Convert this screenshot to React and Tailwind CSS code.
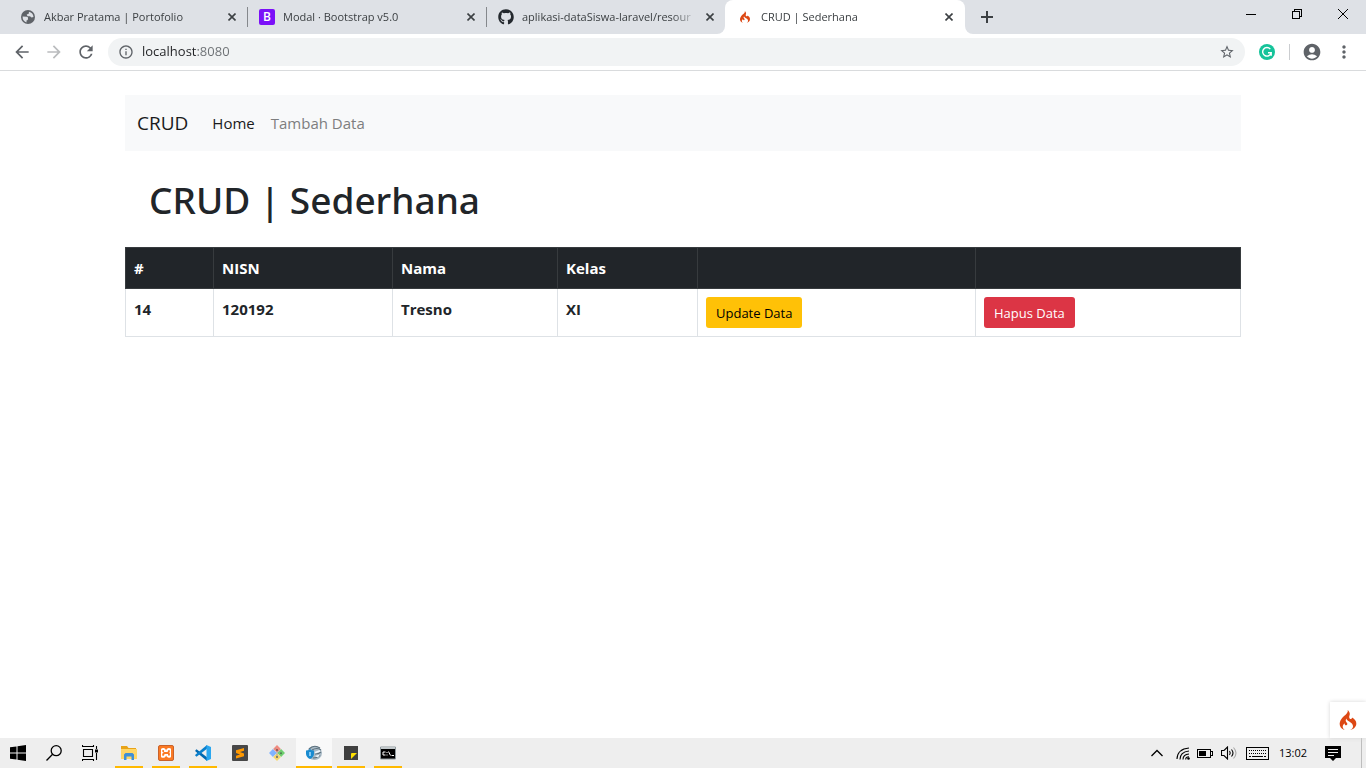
import React from "react";
import { FaGithub } from "react-icons/fa";
import { SiCodeigniter, SiXampp } from "react-icons/si";
import {
  MdArrowBack,
  MdArrowForward,
  MdRefresh,
  MdInfoOutline,
  MdStarBorder,
  MdAccountCircle,
  MdMoreVert,
} from "react-icons/md";

function GlobeIcon() {
  return (
    <svg viewBox="0 0 16 16" className="size-4">
      <circle cx="8" cy="8" r="7" fill="#5f6368" />
      <path
        d="M2.600 7.500L7 7.800q1.500.5 1 2l-.3 1.200-1.200.6v2Q2.500 12 2.600 7.500zM9 2.700q4 .8 4.500 5.300l-2 .5-1.500-1.200H7.500L6.700 5.500l2-.8z"
        fill="#dee1e6"
      />
    </svg>
  );
}

const tabs = [
  { title: "Akbar Pratama | Portofolio", icon: <GlobeIcon /> },
  {
    title: "Modal · Bootstrap v5.0",
    icon: (
      <span className="flex size-4 items-center justify-center rounded-xs bg-[#7b10f8] text-xs font-semibold text-white">
        B
      </span>
    ),
  },
  {
    title: "aplikasi-dataSiswa-laravel/resour",
    icon: <FaGithub className="size-4 text-[#24292e]" />,
  },
];

function CloseIcon({ className }) {
  return (
    <svg viewBox="0 0 8 8" className={className} fill="none" stroke="currentColor" strokeWidth="1.6">
      <path d="M.5.5l7 7M7.5.5l-7 7" />
    </svg>
  );
}

function Tab({ title, icon }) {
  return (
    <div className="flex h-full w-60 shrink-0 items-center pr-2 pl-3">
      <span className="shrink-0">{icon}</span>
      <a
        href="#tab"
        className="ml-2 flex-1 text-[11px] whitespace-nowrap text-[#3c4043] [mask-image:linear-gradient(to_right,black_150px,transparent_176px)]"
      >
        {title}
      </a>
      <button type="button" aria-label="Close tab" className="flex w-4 shrink-0 justify-center text-[#3c4043]">
        <CloseIcon className="size-2" />
      </button>
    </div>
  );
}

function TabStrip() {
  return (
    <div className="flex h-[34px] bg-white">
      <div className="flex items-center rounded-br-lg bg-[#dee1e6] pl-2">
        {tabs.map((tab, i) => (
          <div key={tab.title} className="flex h-full w-[239px] items-center">
            <span className={i > 0 ? "-mr-px h-5 w-px shrink-0 bg-[#85888c]" : "hidden"} />
            <Tab {...tab} />
          </div>
        ))}
      </div>
      <div className="bg-[#dee1e6]">
        <div className="h-full rounded-t-lg bg-white">
          <Tab title="CRUD | Sederhana" icon={<SiCodeigniter className="size-4 p-0.5 text-[#dd4814]" />} />
        </div>
      </div>
      <div className="flex flex-1 rounded-bl-lg bg-[#dee1e6]">
        <button type="button" aria-label="New tab" className="flex w-11 items-center justify-center">
          <svg viewBox="0 0 12 12" className="size-3" stroke="#3c4043" strokeWidth="2">
            <path d="M6 0v12M0 6h12" />
          </svg>
        </button>
        <div className="ml-auto flex h-7">
          <button type="button" aria-label="Minimize" className="flex w-[46px] items-center justify-center">
            <svg viewBox="0 0 10 10" className="size-2.5" stroke="#000" shapeRendering="crispEdges">
              <path d="M0 5.5h10" />
            </svg>
          </button>
          <button type="button" aria-label="Restore" className="flex w-[46px] items-center justify-center">
            <svg viewBox="0 0 10 10" className="size-2.5" fill="none" stroke="#000" shapeRendering="crispEdges">
              <path d="M.5 2.5h7v7h-7zM2.5 2.5v-2h7v7h-2" />
            </svg>
          </button>
          <button type="button" aria-label="Close" className="flex w-[46px] items-center justify-center">
            <svg viewBox="0 0 10 10" className="size-2.5" fill="none" stroke="#000">
              <path d="M0 0l10 10M10 0L0 10" />
            </svg>
          </button>
        </div>
      </div>
    </div>
  );
}

function Toolbar() {
  return (
    <div className="flex h-[37px] items-center border-b border-[#d9dbdd] bg-white pr-3 pl-1.5 text-[#5f6368]">
      <button type="button" aria-label="Back" className="flex w-8 justify-center">
        <MdArrowBack className="size-5 stroke-current" />
      </button>
      <button type="button" aria-label="Forward" className="flex w-8 justify-center text-[#babcbe]">
        <MdArrowForward className="size-5 stroke-current" />
      </button>
      <button type="button" aria-label="Reload" className="flex w-8 justify-center">
        <MdRefresh className="size-5" />
      </button>
      <div className="ml-1.5 flex h-7 flex-1 items-center rounded-full bg-[#f1f3f4] px-2.5">
        <MdInfoOutline className="size-4" />
        <input
          aria-label="Address"
          defaultValue="localhost:8080"
          className="ml-2 flex-1 bg-[linear-gradient(to_right,#202124_55px,#6b6f73_55px)] bg-clip-text text-[13px] text-transparent outline-none"
        />
        <button type="button" aria-label="Bookmark">
          <MdStarBorder className="size-4 stroke-current" />
        </button>
      </div>
      <button type="button" aria-label="Grammarly" className="flex w-11 justify-center">
        <svg viewBox="0 0 16 16" className="size-4" fill="none">
          <circle cx="8" cy="8" r="8" fill="#15c39a" />
          <path d="M11.3 5.1A4.3 4.3 0 1 0 12.2 8.7H9M12.2 8.7v3" stroke="#fff" strokeWidth="1.4" />
        </svg>
      </button>
      <span className="h-4 w-px bg-[#cbcdd0]" />
      <button type="button" aria-label="Profile" className="flex w-11 justify-center">
        <MdAccountCircle className="size-5" />
      </button>
      <button type="button" aria-label="Menu" className="flex w-5 justify-center">
        <MdMoreVert className="size-5 shrink-0" />
      </button>
    </div>
  );
}

const cell = "border px-2 py-2 text-left align-top";

function Page() {
  return (
    <main className="relative flex-1 bg-white text-[#212529]">
      <div className="mx-auto max-w-[1140px] px-3 pt-6">
        <nav className="flex h-14 items-center bg-[#f8f9fa] px-3 text-[15px]">
          <a href="#crud" className="mr-6 text-[19px] text-[#1a1b1c]">
            CRUD
          </a>
          <a href="#home" className="mr-4 text-[#1a1b1c]">
            Home
          </a>
          <a href="#tambah" className="text-[#7d7e7f]">
            Tambah Data
          </a>
        </nav>
        <h1 className="mt-6 ml-6 font-['Noto_Sans',sans-serif] text-[37px] leading-[50px] font-medium">
          CRUD | Sederhana
        </h1>
        <table className="mt-[22px] w-full table-fixed border-collapse text-[15px] leading-6 font-bold">
          <colgroup>
            <col className="w-[88px]" />
            <col className="w-[179px]" />
            <col className="w-[165px]" />
            <col className="w-[140px]" />
            <col className="w-[278px]" />
            <col className="w-[265px]" />
          </colgroup>
          <thead>
            <tr className="bg-[#212529] text-white">
              <th className={cell + " border-[#373b3e]"}>#</th>
              <th className={cell + " border-[#373b3e]"}>NISN</th>
              <th className={cell + " border-[#373b3e]"}>Nama</th>
              <th className={cell + " border-[#373b3e]"}>Kelas</th>
              <th className={cell + " border-[#373b3e]"} />
              <th className={cell + " border-[#373b3e]"} />
            </tr>
          </thead>
          <tbody>
            <tr>
              <th className={cell + " border-[#dee2e6]"}>14</th>
              <th className={cell + " border-[#dee2e6]"}>120192</th>
              <th className={cell + " border-[#dee2e6]"}>Tresno</th>
              <th className={cell + " border-[#dee2e6]"}>XI</th>
              <td className={cell + " border-[#dee2e6]"}>
                <button type="button" className="block h-[31px] rounded-[3px] bg-[#ffc107] px-2.5 text-[13px] font-normal text-black">
                  Update Data
                </button>
              </td>
              <td className={cell + " border-[#dee2e6]"}>
                <button type="button" className="block h-[31px] rounded-[3px] bg-[#dc3545] px-2.5 text-[13px] font-normal text-white">
                  Hapus Data
                </button>
              </td>
            </tr>
          </tbody>
        </table>
      </div>
      <button
        type="button"
        aria-label="Debug toolbar"
        className="absolute right-0 bottom-0 flex size-9 items-center justify-center bg-white text-[#dd4814] shadow-[0_0_4px_#d5d5d5]"
      >
        <SiCodeigniter className="size-5" />
      </button>
    </main>
  );
}

const apps = [
  {
    name: "File Explorer",
    bar: true,
    icon: (
      <svg viewBox="0 0 16 16" className="size-4">
        <path d="M0 1h6l1.5 2H15v4H0z" fill="#e8a317" />
        <path d="M0 4h16v10H0z" fill="#ffd667" />
        <path d="M3 15V9.500L4.500 8h7L13 9.500V15h-2.500v-3.500h-5V15z" fill="#3f8fd6" />
      </svg>
    ),
  },
  {
    name: "XAMPP",
    bar: true,
    icon: (
      <span className="flex size-4 items-center justify-center rounded-xs border border-[#c9622a] bg-[#fb7a24] text-[#fb7a24]">
        <span className="flex size-2.5 items-center justify-center overflow-hidden bg-white">
          <SiXampp className="size-4 shrink-0" />
        </span>
      </span>
    ),
  },
  {
    name: "Visual Studio Code",
    bar: true,
    icon: (
      <svg viewBox="0 0 16 16" className="size-4">
        <path d="M.300 5.400L1.500 4.300 12 12.300V16L.300 6.200z" fill="#0068b0" />
        <path d="M.300 10.600L1.500 11.700 12 3.700V0L.300 9.800z" fill="#0a7fcc" />
        <path d="M11.500 0L16 2v12l-4.500 2z" fill="#2aa7f0" />
      </svg>
    ),
  },
  {
    name: "Sublime Text",
    icon: (
      <svg viewBox="0 0 16 16" className="size-4">
        <rect width="16" height="16" rx="1" fill="#474747" />
        <path d="M12 3v2.800L8 7.100l4 1.500v2.700L4 13.500v-2.700l4-1.400-4-1.500V5.200z" fill="#ff9800" />
      </svg>
    ),
  },
  {
    name: "Git Bash",
    icon: (
      <svg viewBox="0 0 16 16" className="size-4">
        <path d="M8 0l3.900 3.900L8 7.800 4.100 3.900z" fill="#f28a7e" />
        <path d="M3.900 4.100L7.800 8l-3.900 3.900L0 8z" fill="#80b3ff" />
        <path d="M12.100 4.100L16 8l-3.900 3.900L8.200 8z" fill="#6fcf70" />
        <path d="M8 8.200l3.900 3.900L8 16l-3.900-3.900z" fill="#f5d76e" />
        <path d="M6 3l6 5M8 5v7" stroke="#a0a0a0" strokeWidth=".8" />
        <circle cx="8" cy="12" r="1" fill="#696969" />
        <circle cx="12" cy="8.300" r="1" fill="#477f48" />
        <circle cx="8" cy="5" r="1" fill="#8a4a44" />
      </svg>
    ),
  },
  {
    name: "Browser",
    bar: true,
    active: true,
    icon: (
      <svg viewBox="0 0 16 16" className="size-4">
        <ellipse cx="8.500" cy="8" rx="7.500" ry="7" fill="#a9bac6" />
        <path d="M3 4q5-5 11-1M6 5q5-3 9 0M9 9q4 0 6-2M7 13q5 0 7-3" stroke="#5c707c" strokeWidth="1.100" fill="none" />
        <path d="M8.500 7l5-2 1 1.500-5 2zM9 11l5-1.500-2 3z" fill="#eef5fa" />
        <path d="M0 5.500q2.500 0 4-1.500 1.500 1.500 4 1.500V9q-.500 3.500-4 5Q.500 12.500 0 9z" fill="#198bd0" />
        <path d="M4 7v4" stroke="#a8ddff" strokeWidth="1.500" />
      </svg>
    ),
  },
  {
    name: "Sticky Notes",
    bar: true,
    icon: (
      <svg viewBox="0 0 16 16" className="size-4">
        <path d="M1 1h14v14H1z" fill="#3f3f3f" />
        <path d="M8 14V9q0-1 1-1h5z" fill="#ffe000" />
      </svg>
    ),
  },
  {
    name: "Command Prompt",
    bar: true,
    icon: (
      <svg viewBox="0 0 16 14" className="h-3.5 w-4">
        <path d="M.500 1h15v12H.500z" fill="#000" stroke="#8e989c" />
        <path d="M1 1h14v2H1z" fill="#c1c7ca" />
        <path d="M5.500 6H3v3h2.500M7 6v1M7 8.500v1M8.500 5.500l2 4M11.500 9.500h2.500" stroke="#fff" fill="none" />
      </svg>
    ),
  },
];

function Taskbar() {
  return (
    <footer className="flex h-[30px] items-center bg-[#eeeeee] text-black">
      <button type="button" aria-label="Start" className="flex w-9 justify-center">
        <svg viewBox="0 0 16 16" className="size-4">
          <path d="M0 2.300L6.500 1.400v6.100H0zM7.500 1.200L16 0v7.500H7.500zM0 8.500h6.500v6.100L0 13.700zM7.500 8.500H16V16l-8.500-1.200z" />
        </svg>
      </button>
      <button type="button" aria-label="Search" className="flex w-9 justify-center">
        <svg viewBox="0 0 16 16" className="size-4" fill="none" stroke="#000" strokeWidth="1.300">
          <circle cx="10.200" cy="5.700" r="5" />
          <path d="M6.600 9.300L.500 15.500" />
        </svg>
      </button>
      <button type="button" aria-label="Task view" className="mr-[3px] flex w-9 justify-center">
        <svg viewBox="0 0 16 16" className="size-4" fill="none" stroke="#000" strokeWidth="1.100">
          <path d="M1.500 4.500h9v7h-9zM.500 0v1.500h11V0M.500 16v-1.500h11V16M14.500 1v3M14.500 8v7" />
          <path d="M13 4.500h3v3h-3z" fill="#000" stroke="none" />
        </svg>
      </button>
      <div className="flex h-full gap-px">
        {apps.map((app) => (
          <button
            key={app.name}
            type="button"
            aria-label={app.name}
            className={
              "flex h-full w-9 flex-col items-center justify-between " + (app.active ? "bg-[#f9f9f9]" : "")
            }
          >
            <span className="flex h-[27px] items-center pt-0.5">{app.icon}</span>
            <span
              className={app.active ? "h-0.5 w-9 bg-[#ffb900]" : app.bar ? "h-0.5 w-7 bg-[#ffb900]" : "h-0.5 w-7"}
            />
          </button>
        ))}
      </div>
      <div className="ml-auto flex h-full items-center">
        <button type="button" aria-label="Show hidden icons" className="flex w-6 justify-center">
          <svg viewBox="0 0 12 8" className="h-2 w-3" fill="none" stroke="#000" strokeWidth="1.300">
            <path d="M.500 7L6 1.500 11.500 7" />
          </svg>
        </button>
        <button type="button" aria-label="Network" className="flex w-6 justify-center pl-1">
          <svg viewBox="0 0 14 14" className="size-3.5" fill="none" stroke="#000" strokeWidth="1.100">
            <path d="M1 13Q1.500 3 13 2M4 13.500Q4 6 13 5M7 13.500Q7 8.500 13 8" />
            <path d="M9.700 13.500q0-2.700 3.300-2.700" />
            <circle cx="12.500" cy="12.500" r="1.300" fill="#000" stroke="none" />
          </svg>
        </button>
        <button type="button" aria-label="Battery" className="flex w-6 justify-center">
          <svg viewBox="0 0 16 9" className="h-[9px] w-4" shapeRendering="crispEdges">
            <path d="M.500.500h13v8H.500zM14 2.500h1.500v4H14" fill="none" stroke="#000" />
            <path d="M2 2h7v5H2z" />
          </svg>
        </button>
        <button type="button" aria-label="Volume" className="flex w-6 justify-center">
          <svg viewBox="0 0 16 14" className="h-3.5 w-4" fill="none" stroke="#000" strokeWidth="1.100">
            <path d="M.500 4.500H3L6.500 1v12L3 9.500H.500z" />
            <path d="M8.500 5q1.500 2 0 4M10.500 3.500q3 3.500 0 7" />
            <path d="M12.500 1.500q5 5.500 0 11" stroke="#aaa" />
          </svg>
        </button>
        <button type="button" aria-label="Keyboard" className="flex w-8 justify-center">
          <svg viewBox="0 0 23 13" className="h-[13px] w-[23px]" fill="none" stroke="#000" shapeRendering="crispEdges">
            <path d="M.500.500h22v12H.500z" />
            <path d="M3 3.500h18M3 6.500h18" strokeDasharray="1 1" />
            <path d="M3 9.500h2M6 9.500h11M18 9.500h2" />
          </svg>
        </button>
        <time className="w-10 text-center text-[11px]">13:02</time>
        <button type="button" aria-label="Notifications" className="flex w-10 justify-center">
          <svg viewBox="0 0 16 16" className="size-4">
            <path d="M0 1h16v12h-5l-3 3-3-3H0z" />
            <path d="M3 4.500h10M3 7.500h10M3 10.500h6" stroke="#eee" />
          </svg>
        </button>
        <span className="mr-1 ml-2 h-full w-px bg-[#bdbdbd]" />
      </div>
    </footer>
  );
}

export default function App() {
  return (
    <div className="flex min-h-screen flex-col font-['Open_Sans','Noto_Sans',sans-serif]">
      <TabStrip />
      <Toolbar />
      <Page />
      <Taskbar />
    </div>
  );
}
